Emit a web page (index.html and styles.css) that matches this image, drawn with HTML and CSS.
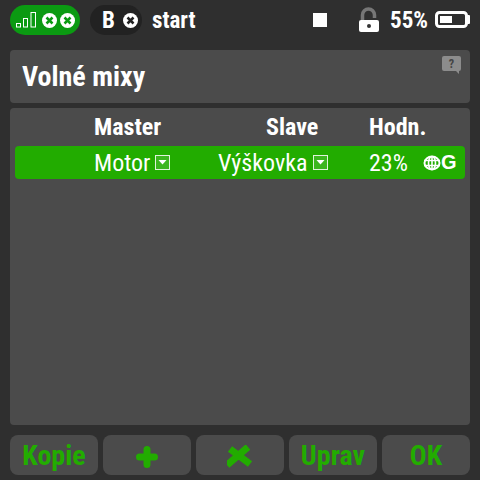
FILE: index.html
```html
<!DOCTYPE html>
<html lang="cs">
<head>
  <meta charset="UTF-8">
  <title>Volné mixy</title>
  <link rel="stylesheet" href="styles.css">
</head>
<body>

<svg class="defs" width="0" height="0">
  <symbol id="off" viewBox="0 0 15 15">
    <circle cx="7.500" cy="7.500" r="7.500" fill="#fff"/>
    <path d="M4.500 4.500l6 6M10.500 4.500l-6 6" stroke="currentColor" stroke-width="2.500" fill="none"/>
  </symbol>
  <symbol id="pick" viewBox="0 0 15 15">
    <rect x="0.500" y="0.500" width="14" height="14" fill="#fff" fill-opacity="0.120" stroke="#fff" stroke-opacity="0.850"/>
    <path d="M3.500 5h8l-4 4.500z" fill="#fff"/>
  </symbol>
</svg>

<div class="status">
  <div class="pill pill-radio">
    <svg class="bars" width="22" height="16" viewBox="0 0 22 16">
      <rect x="1.500" y="11.500" width="4" height="3.500" fill="none" stroke="#fff"/>
      <rect x="8.500" y="6.500" width="4" height="8.500" fill="none" stroke="#fff"/>
      <rect x="16" y="0.500" width="4.500" height="14.500" fill="none" stroke="#fff"/>
    </svg>
    <svg class="off" width="15" height="15"><use href="#off"/></svg>
    <svg class="off" width="15" height="15"><use href="#off"/></svg>
  </div>
  <div class="pill pill-model">
    <span class="model-letter">B</span>
    <svg class="off" width="15" height="15"><use href="#off"/></svg>
  </div>
  <span class="model-name">start</span>
  <div class="status-right">
    <div class="stop"></div>
    <svg class="lock" width="22" height="26" viewBox="0 0 22 26">
      <path d="M4.500 13V8a6 6 0 0 1 12 0v3" fill="none" stroke="#777" stroke-width="3.500"/>
      <rect x="1" y="13" width="20" height="12" rx="2" fill="#fff"/>
      <circle cx="11" cy="19" r="2" fill="#333"/>
    </svg>
    <span class="batt-text">55%</span>
    <svg class="battery" width="35" height="18" viewBox="0 0 35 18">
      <rect x="1.500" y="1.500" width="30" height="14" rx="3" fill="none" stroke="#fff" stroke-width="3"/>
      <rect x="5" y="5" width="12" height="7" fill="#fff"/>
      <rect x="32" y="4" width="3" height="9" rx="1" fill="#fff"/>
    </svg>
  </div>
</div>

<div class="panel title-panel">
  <h1>Volné mixy</h1>
  <svg class="help" width="20" height="19" viewBox="0 0 20 19">
    <path d="M2 0h15a2 2 0 0 1 2 2v11a2 2 0 0 1-2 2v3l-3-3H2a2 2 0 0 1-2-2V2a2 2 0 0 1 2-2z" fill="#8c8c8c"/>
    <text x="9.500" y="12" text-anchor="middle" class="help-mark">?</text>
  </svg>
</div>

<div class="panel list-panel">
  <div class="mix-row mix-head">
    <span>Master</span>
    <span class="slave-head">Slave</span>
    <span>Hodn.</span>
  </div>
  <div class="mix-row mix-line">
    <span class="cell">Motor <svg class="pick" width="15" height="15"><use href="#pick"/></svg></span>
    <span class="cell">Výškovka <svg class="pick" width="15" height="15"><use href="#pick"/></svg></span>
    <span class="cell val-cell">23%
      <span class="flags">
        <svg class="globe" width="18" height="16" viewBox="0 0 18 16">
          <ellipse cx="9" cy="8" rx="7.500" ry="6.500" fill="none" stroke="#fff" stroke-width="2"/>
          <ellipse cx="9" cy="8" rx="3.500" ry="6.500" fill="none" stroke="#fff" stroke-width="1.600"/>
          <path d="M1 5.500h16M1 10.500h16M9 1v14" stroke="#fff" stroke-width="1.600"/>
        </svg>
        <span class="flag-g">G</span>
      </span>
    </span>
  </div>
</div>

<div class="buttons">
  <div class="btn">Kopie</div>
  <div class="btn">
    <svg class="btn-icon" width="24" height="24" viewBox="0 0 24 24"><path d="M12 4.500v15M4.500 12h15" stroke="#22ac00" stroke-width="7" stroke-linecap="round"/></svg>
  </div>
  <div class="btn">
    <svg class="btn-icon" width="26" height="24" viewBox="0 0 26 24"><path d="M0 20L21 2M3 4l20 15" stroke="#22ac00" stroke-width="7" fill="none"/></svg>
  </div>
  <div class="btn">Uprav</div>
  <div class="btn">OK</div>
</div>

</body>
</html>
```

FILE: styles.css
```css
html, body {
  margin: 0;
  height: 100%;
}
body {
  width: 480px;
  height: 480px;
  overflow: hidden;
  box-sizing: border-box;
  padding: 5px 10px;
  background: #2f2f2f;
  color: #fff;
  font-family: "Roboto", "Liberation Sans", sans-serif;
  font-stretch: 75%;
  display: flex;
  flex-direction: column;
}
.defs {
  position: absolute;
}
svg {
  display: block;
  flex: none;
}
.status {
  display: flex;
  align-items: center;
  height: 30px;
  margin-bottom: 15px;
}
.pill {
  display: flex;
  align-items: center;
  height: 30px;
  border-radius: 15px;
  box-sizing: border-box;
}
.pill-radio {
  width: 70px;
  background: #0b9a12;
  color: #0b9a12;
  padding-left: 5px;
  gap: 3px;
}
.bars {
  margin-right: 2px;
}
.pill-model {
  width: 52px;
  margin-left: 10px;
  background: #222;
  color: #222;
  padding-left: 12px;
  gap: 8px;
}
.model-letter {
  color: #fff;
  font-size: 23px;
  font-weight: 700;
}
.model-name {
  margin-left: 10px;
  font-size: 23px;
  font-weight: 700;
}
.status-right {
  margin-left: auto;
  display: flex;
  align-items: center;
}
.stop {
  width: 14px;
  height: 14px;
  background: #fff;
  margin-right: 31px;
}
.batt-text {
  margin-left: 10px;
  font-size: 23px;
  font-weight: 700;
}
.battery {
  margin-left: 7px;
}
.panel {
  background: #4b4b4b;
  border-radius: 4px;
}
.title-panel {
  position: relative;
  height: 53px;
  display: flex;
  align-items: center;
  padding-left: 12px;
  margin-bottom: 5px;
}
h1 {
  margin: 0;
  font-size: 28px;
  font-weight: 700;
}
.help {
  position: absolute;
  top: 6px;
  right: 8px;
}
.help-mark {
  font-size: 12px;
  font-weight: 700;
  fill: #444;
}
.list-panel {
  height: 317px;
  padding: 0 5px;
  margin-bottom: 10px;
}
.mix-row {
  display: grid;
  grid-template-columns: 124px 151px 1fr;
  align-items: center;
  padding-left: 79px;
  border-radius: 4px;
}
.mix-head {
  height: 38px;
  font-size: 24px;
  font-weight: 700;
}
.slave-head {
  padding-left: 48px;
}
.mix-line {
  height: 33px;
  background: #22ac00;
  font-size: 24px;
}
.cell {
  display: flex;
  align-items: center;
  gap: 5px;
}
.val-cell {
  gap: 15px;
}
.flags {
  display: flex;
  align-items: center;
}
.flag-g {
  font-size: 20px;
  font-weight: 700;
  font-family: "Liberation Sans", sans-serif;
  font-stretch: normal;
}
.buttons {
  display: grid;
  grid-template-columns: repeat(5, 88px);
  gap: 5px;
}
.btn {
  height: 40px;
  border-radius: 8px;
  background: #4b4b4b;
  color: #22ac00;
  font-size: 28px;
  font-weight: 700;
  display: flex;
  align-items: center;
  justify-content: center;
}
.btn-icon {
  margin-top: 4px;
}
```
